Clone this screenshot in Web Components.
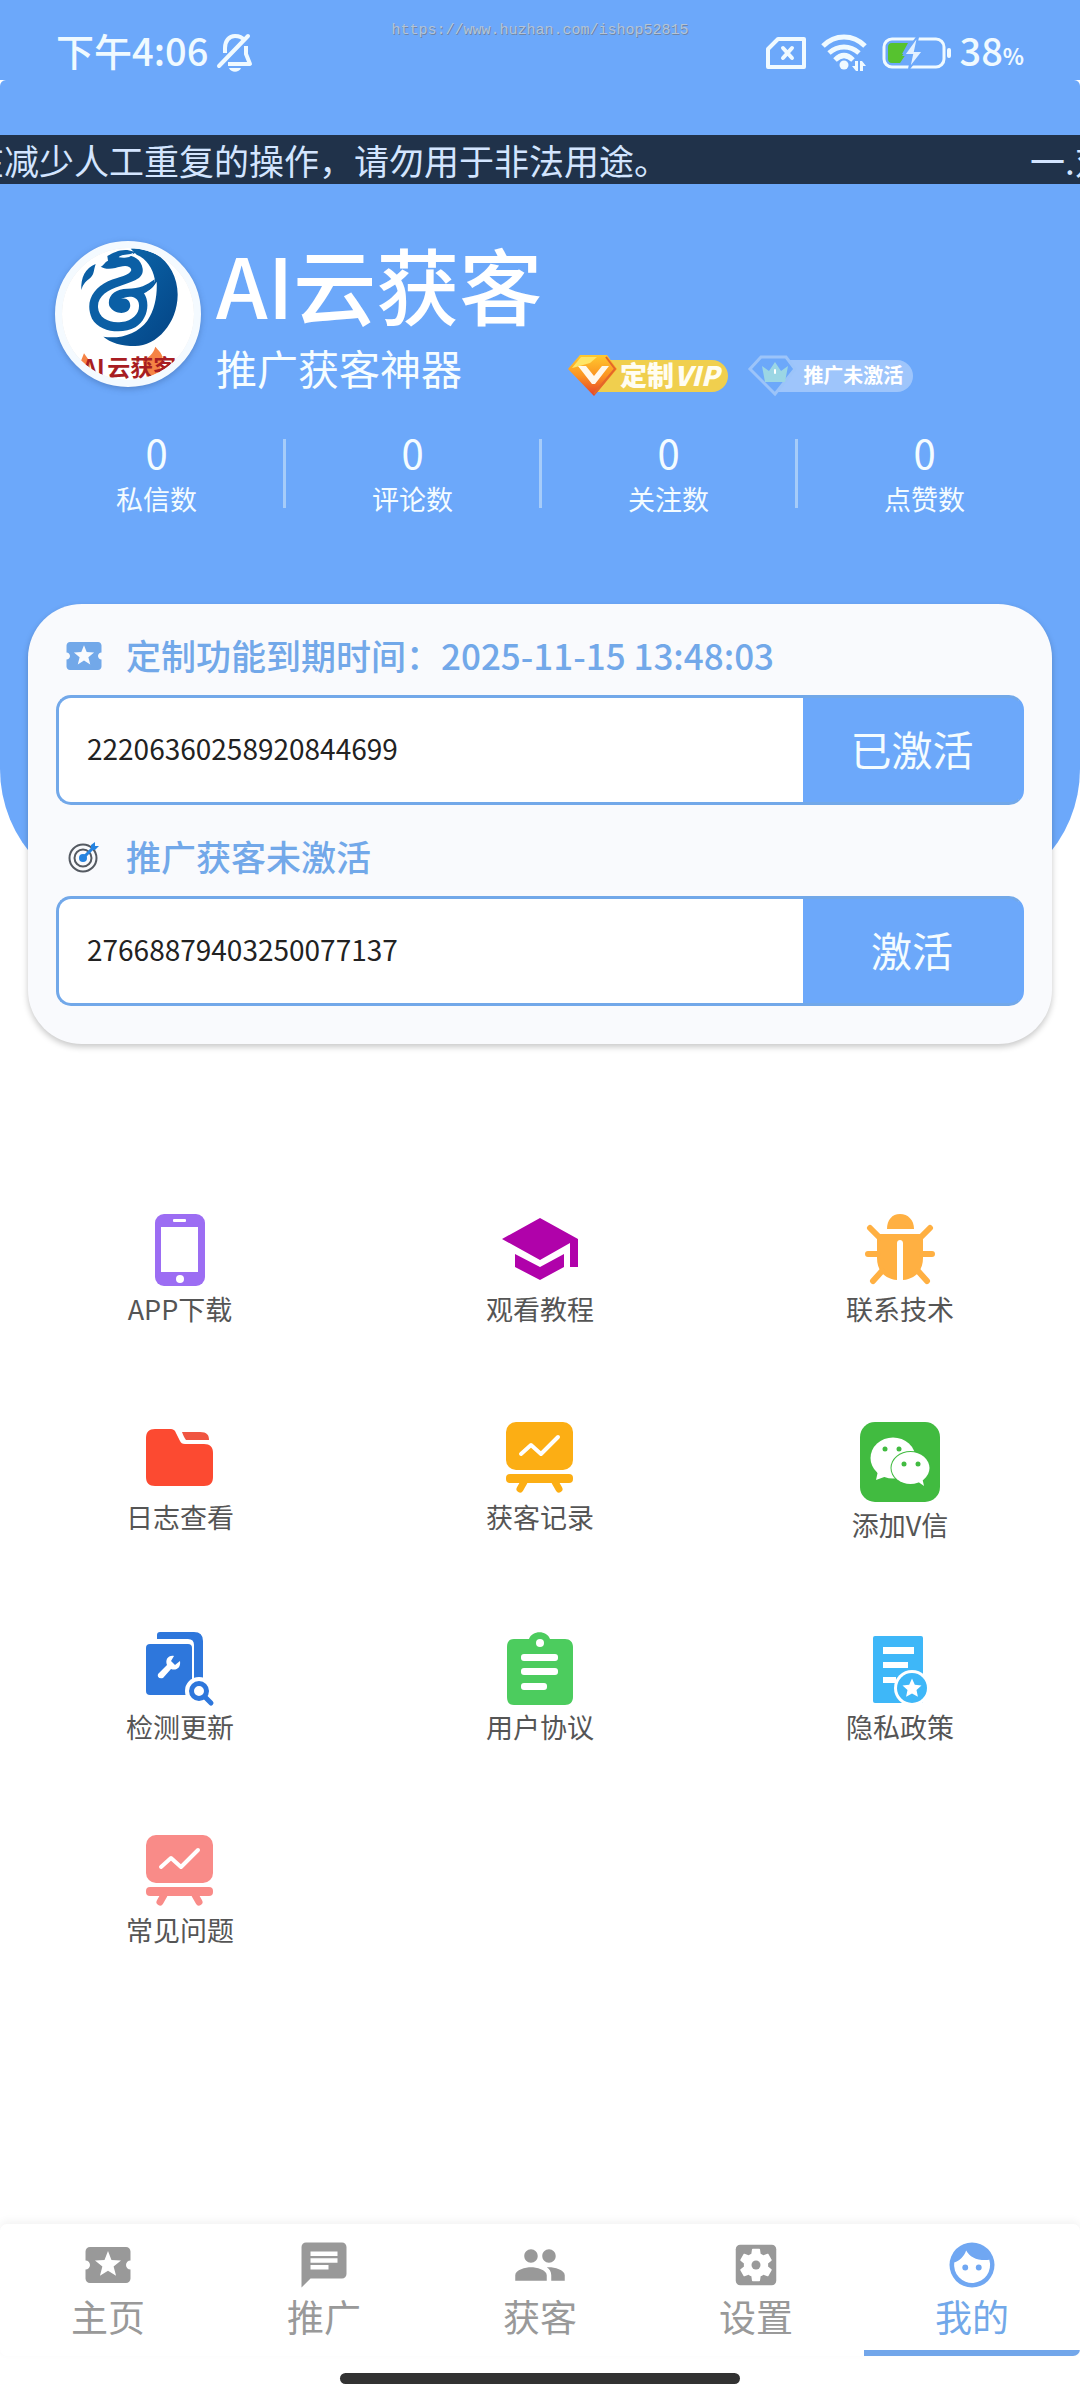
<!DOCTYPE html>
<html lang="zh-CN">
<head>
<meta charset="UTF-8">
<meta name="viewport" content="width=device-width, initial-scale=1">
<title>AI云获客</title>
<style>
:root {
    --blue: #6ca8fa;
    --blue-text: #72a8e9;
    --grey: #999999;
}
body {
    margin: 0;
    background: #ffffff;
    font-family: "Noto Sans CJK SC", "Noto Sans", sans-serif;
}
</style>
</head>
<body>

<my-page>
    <status-bar slot="status" time="下午4:06" battery="38"></status-bar>

    <profile-header slot="header">
        <notice-bar slot="notice">
            <span>在减少人工重复的操作，请勿用于非法用途。</span>
            <span>一.对</span>
        </notice-bar>
        <span slot="name">AI云获客</span>
        <span slot="slogan">推广获客神器</span>
        <vip-badge slot="badges" kind="gold">定制<i>VIP</i></vip-badge>
        <vip-badge slot="badges" kind="off">推广未激活</vip-badge>
        <stat-item slot="stats" value="0">私信数</stat-item>
        <stat-item slot="stats" value="0">评论数</stat-item>
        <stat-item slot="stats" value="0">关注数</stat-item>
        <stat-item slot="stats" value="0" last>点赞数</stat-item>
    </profile-header>

    <activation-card>
        <activation-field icon="ticket" code="22206360258920844699" action="已激活">定制功能到期时间：2025-11-15 13:48:03</activation-field>
        <activation-field icon="target" code="27668879403250077137" action="激活">推广获客未激活</activation-field>
    </activation-card>

    <menu-grid>
        <menu-item icon="phone">APP下载</menu-item>
        <menu-item icon="cap">观看教程</menu-item>
        <menu-item icon="bug">联系技术</menu-item>
        <menu-item icon="folder">日志查看</menu-item>
        <menu-item icon="board" style="color:#fcae14">获客记录</menu-item>
        <menu-item icon="wechat" large>添加V信</menu-item>
        <menu-item icon="check">检测更新</menu-item>
        <menu-item icon="clipboard">用户协议</menu-item>
        <menu-item icon="privacy">隐私政策</menu-item>
        <menu-item icon="board" style="color:#f98b88">常见问题</menu-item>
    </menu-grid>

    <tab-bar slot="tabs">
        <tab-item icon="ticket">主页</tab-item>
        <tab-item icon="chat">推广</tab-item>
        <tab-item icon="people">获客</tab-item>
        <tab-item icon="settings">设置</tab-item>
        <tab-item icon="face" active>我的</tab-item>
    </tab-bar>
</my-page>

<script>
// alle Icons an einer Stelle: [viewBox, Inhalt]
const ICONS = {
    ticket: ['0 0 24 24', '<path fill="currentColor" d="M20 12c0-1.1.9-2 2-2V6c0-1.1-.9-2-2-2H4c-1.1 0-1.99.9-1.99 2v4c1.1 0 1.99.9 1.99 2s-.89 2-2 2v4c0 1.1.9 2 2 2h16c1.1 0 2-.9 2-2v-4c-1.1 0-2-.9-2-2zm-4.42 4.8L12 14.5l-3.58 2.3 1.08-4.12-3.29-2.69 4.24-.25L12 5.8l1.54 3.95 4.24.25-3.29 2.69 1.09 4.11z"/>'],
    chat: ['0 0 24 24', '<path fill="currentColor" d="M20 2H4c-1.1 0-1.99.9-1.99 2L2 22l4-4h14c1.1 0 2-.9 2-2V4c0-1.1-.9-2-2-2zM6 9h12v2H6V9zm8 5H6v-2h8v2zm4-6H6V6h12v2z"/>'],
    people: ['0 0 24 24', '<path fill="currentColor" d="M16 11c1.66 0 2.99-1.34 2.99-3S17.66 5 16 5c-1.66 0-3 1.34-3 3s1.34 3 3 3zm-8 0c1.66 0 2.99-1.34 2.99-3S9.66 5 8 5C6.34 5 5 6.34 5 8s1.34 3 3 3zm0 2c-2.33 0-7 1.17-7 3.5V19h14v-2.5c0-2.33-4.67-3.5-7-3.5zm8 0c-.29 0-.62.02-.97.05 1.16.84 1.97 1.97 1.97 3.45V19h6v-2.5c0-2.33-4.67-3.5-7-3.5z"/>'],
    settings: ['0 0 24 24', '<rect x="3" y="3" width="18" height="18" rx="2" fill="currentColor"/><path fill="#fff" transform="translate(12 12) scale(.72) translate(-12 -12)" d="M19.43 12.98c.04-.32.07-.64.07-.98s-.03-.66-.07-.98l2.11-1.65c.19-.15.24-.42.12-.64l-2-3.46c-.12-.22-.39-.3-.61-.22l-2.49 1c-.52-.4-1.08-.73-1.69-.98l-.38-2.65C14.46 2.18 14.25 2 14 2h-4c-.25 0-.46.18-.49.42l-.38 2.65c-.61.25-1.17.59-1.69.98l-2.49-1c-.23-.09-.49 0-.61.22l-2 3.46c-.13.22-.07.49.12.64l2.11 1.65c-.04.32-.07.65-.07.98s.03.66.07.98l-2.11 1.65c-.19.15-.24.42-.12.64l2 3.46c.12.22.39.3.61.22l2.49-1c.52.4 1.08.73 1.69.98l.38 2.65c.03.24.24.42.49.42h4c.25 0 .46-.18.49-.42l.38-2.65c.61-.25 1.17-.59 1.69-.98l2.49 1c.23.09.49 0 .61-.22l2-3.46c.12-.22.07-.49-.12-.64l-2.11-1.65z"/><circle cx="12" cy="12" r="2" fill="currentColor"/>'],
    face: ['0 0 24 24', '<circle cx="12" cy="12" r="10" fill="currentColor"/><path fill="#fff" d="M9.4 5.5C11 8.500 14.600 10.300 19.700 9.700A8 8 0 1 1 4.100 10.900C6.500 10 8.600 8 9.400 5.500Z"/><circle cx="9" cy="13.100" r="1.300" fill="currentColor"/><circle cx="15" cy="13.100" r="1.300" fill="currentColor"/>'],
    target: ['0 0 42 42', '<g fill="none" stroke="#555a62" stroke-width="2"><circle cx="20" cy="22" r="13.500"/><circle cx="20" cy="22" r="8.500"/></g><circle cx="20" cy="22" r="4" fill="#2583e0"/><path d="M20 22L31 11" stroke="#2583e0" stroke-width="3"/><path d="M28 14V9l4-3v4h4l-4 4z" fill="#2583e0"/>'],
    phone: ['0 0 72 72', '<rect x="11" width="50" height="72" rx="9" fill="#9c6df3"/><rect x="17" y="13" width="37" height="45" fill="#fff"/><rect x="29" y="5" width="13" height="3" rx="1" fill="#fff"/><circle cx="36" cy="65" r="4" fill="#fff"/>'],
    cap: ['0 0 72 72', '<path fill="#b002aa" d="M36 4L74 25V53H66V29L36 46L-2 25Z"/><path fill="#b002aa" d="M11 40L36 53L60 40V53L36 66L11 53Z"/>'],
    bug: ['0 0 72 72', '<g fill="#ffb042"><path d="M23 15C23 6 28 0 36 0s14 6 14 15z"/><path d="M13 20H59V44C59 57 51 65 39 66V29c0-4-6-4-6 0V66C21 65 13 57 13 44z"/></g><path fill="none" stroke="#ffb042" stroke-width="6" stroke-linecap="round" d="M6 14L16 24M66 14L56 24M4 40H14M68 40H58M9 67L18 57M63 67L54 57"/>'],
    folder: ['0 0 72 72', '<path fill="#fc4a31" d="M11 7H27c2 0 3 1 4 2l5 10c1 2 2 3 5 3H60c6 0 9 3 9 9V55c0 6-3 9-9 9H11c-6 0-9-3-9-9V16c0-6 3-9 9-9z"/><path fill="#f05541" d="M38 10H56c7 0 9 3 9 8H42c-2-3-3-5-4-8z"/>'],
    board: ['0 0 72 72', '<g fill="currentColor"><rect x="2" width="67" height="48" rx="10"/><rect x="2" y="52" width="67" height="9" rx="4"/></g><path fill="none" stroke="currentColor" stroke-width="7" stroke-linecap="round" d="M20 60L16 67M51 60L55 67"/><path fill="none" stroke="#fff" stroke-width="4" stroke-linecap="round" stroke-linejoin="round" d="M17 32L27 23L37 32L54 15"/>'],
    wechat: ['0 0 80 80', '<rect width="80" height="80" rx="15" fill="#41bb40"/><ellipse cx="33" cy="36" rx="22.500" ry="20.500" fill="#fff"/><path d="M18 49L16 58L27 54z" fill="#fff"/><ellipse cx="50.500" cy="46" rx="20" ry="17" fill="#41bb40"/><ellipse cx="50.500" cy="46" rx="19" ry="16" fill="#fff"/><path d="M57 59L64 64L62 55z" fill="#fff"/><g fill="#41bb40"><circle cx="25" cy="27" r="2.500"/><circle cx="39" cy="27" r="2.500"/><circle cx="44" cy="42" r="2.500"/><circle cx="58" cy="42" r="2.500"/></g>'],
    check: ['0 0 72 72', '<g fill="#2e77dc"><path d="M13 7V3q0-3 3-3H50q9 0 9 9V46H50V13q0-6-6-6z"/><rect x="2" y="12" width="46" height="51" rx="4"/></g><path fill="#fff" d="M14 42L23 33C21 28 24 23 30 24L27 29L31 33L36 29C37 36 32 39 27 37L19 46C15 47 13 45 14 42z"/><circle cx="55" cy="59" r="14" fill="#fff"/><path d="M61 65L67 71" stroke="#2e77dc" stroke-width="5" stroke-linecap="round"/><circle cx="55" cy="59" r="7.500" fill="#fff" stroke="#2e77dc" stroke-width="5"/>'],
    clipboard: ['0 0 72 72', '<path fill="#4ccc5e" d="M10 7H25C28-2 43-2 46 7H61c5 0 8 3 8 8V65c0 5-3 8-8 8H10c-5 0-7-3-7-8V15c0-5 2-8 7-8z"/><g fill="#fff"><circle cx="36" cy="11" r="4"/><rect x="17" y="22" width="37" height="7" rx="3"/><rect x="17" y="36" width="37" height="7" rx="3"/><rect x="17" y="51" width="26" height="7" rx="3"/></g>'],
    privacy: ['0 0 72 72', '<rect x="9" y="4" width="50" height="67" rx="2" fill="#3eb7f8"/><g fill="#fff"><rect x="19" y="15" width="31" height="7"/><rect x="19" y="30" width="25" height="6"/><rect x="19" y="45" width="13" height="6"/><circle cx="48" cy="56" r="18"/></g><circle cx="48" cy="56" r="15" fill="#3eb7f8"/><path fill="#fff" d="M48 46.500l2.800 6.300 6.700.7-5 4.600 1.400 6.700-5.900-3.400-5.900 3.400 1.400-6.700-5-4.600 6.700-.7z"/>'],
    bellOff: ['0 0 36 38', '<g fill="none" stroke="#f0faff" stroke-width="4" stroke-linejoin="round"><path d="M8 19V14C8 7 12 2 18 2C22 2 25 3 27 6"/><path d="M29 12V20L33 30H11"/><path d="M2 32L31 2" stroke-linecap="round"/></g><path d="M12 34H24C22 39 14 39 12 34z" fill="#f0faff"/>'],
    sim: ['0 0 40 32', '<path fill="none" stroke="#f0faff" stroke-width="4" stroke-linejoin="round" d="M12 2H38V30H2V12z"/><path stroke="#f0faff" stroke-width="4" stroke-linecap="round" d="M17 11L26 21M26 11L17 21"/>'],
    wifi: ['0 0 46 36', '<g fill="none" stroke="#f0faff" stroke-width="5"><path d="M2 11C14-1 32-1 44 11"/><path d="M8 18C17 10 29 10 38 18"/><path d="M14 25C20 19 26 19 32 25"/></g><circle cx="23" cy="30" r="4.500" fill="#f0faff"/><path fill="#f0faff" d="M34 26h3v10h-2l-4-5h3zM39 36V26h2l4 5h-3v5z"/>'],
    battery: ['0 0 70 32', '<rect x="2" y="2" width="60" height="28" rx="8" fill="none" stroke="#f0faff" stroke-width="3"/><path fill="#56c22f" d="M10 6H26L20 17H24L18 26H10C7 26 6 24 6 22V10C6 8 7 6 10 6z"/><rect x="65" y="11" width="4" height="10" rx="2" fill="#f0faff"/><path fill="#e4f1ff" stroke="#6ca8fa" stroke-width="2" d="M35 0L22 18H30L27 32L41 14H33L36 0z"/>'],
    gem: ['0 0 50 42', '<defs><linearGradient id="g" x1="0" y1="0" x2="0" y2="1"><stop offset="0" stop-color="#ffc92e"/><stop offset=".5" stop-color="#fb9421"/><stop offset="1" stop-color="#e5402a"/></linearGradient></defs><path fill="url(#g)" d="M12 0H39L49 14L26 41L0 14z"/><path fill="#ffe566" d="M13 2H29L22 8L8 12L4 13z"/><path fill="none" stroke="#e3672a" stroke-width="2" d="M38 2L47 14L26 39"/><path fill="#fff8ec" d="M10 11H18L26 21L34 11H41L27 29H24z"/>'],
    crown: ['0 0 50 42', '<path fill="#6ca8fa" stroke="#9cc4f9" stroke-width="3" d="M13 2H38L47 14L27 39L2 14z"/><path fill="#9bd6e4" d="M14 11L21 16L27 7L33 16L40 11L37 27H17z"/><rect x="26" y="14" width="2" height="5" rx="1" fill="#fff"/>']
};

class appIcon extends HTMLElement {
    constructor() {
        super();
        this.attachShadow({ mode: 'open' });
    }
    connectedCallback() {
        const [box, body] = ICONS[this.getAttribute('name')];
        this.shadowRoot.innerHTML = `
          <style>
:host { display: block; flex: none; }
svg { display: block; width: 100%; height: 100%; overflow: visible; }
          </style>
          <svg viewBox="${box}" aria-hidden="true">${body}</svg>
        `;
    }
}
customElements.define('app-icon', appIcon);

class myPage extends HTMLElement {
    constructor() {
        super();
        this.attachShadow({ mode: 'open' }).innerHTML = `
          <style>
:host {
    display: flex;
    flex-direction: column;
    min-height: 100vh;
    overflow: hidden;
}
footer { margin-top: auto; }
.homeBar {
    width: 37%;
    height: 11px;
    margin: 17px auto 16px;
    border-radius: 6px;
    background: #323232;
}
          </style>
          <slot name="status"></slot>
          <slot name="header"></slot>
          <main><slot></slot></main>
          <footer>
            <slot name="tabs"></slot>
            <div class="homeBar"></div>
          </footer>
        `;
    }
}
customElements.define('my-page', myPage);

class statusBar extends HTMLElement {
    constructor() {
        super();
        this.attachShadow({ mode: 'open' }).innerHTML = `
          <style>
:host {
    display: grid;
    grid-template-columns: 1fr auto 1fr;
    height: 80px;
    padding: 0 56px;
    box-sizing: border-box;
    background: var(--blue);
    color: #f0faff;
}
.group {
    display: flex;
    align-items: center;
    height: 106px;
    font-size: 38px;
    font-weight: 500;
}
.group span { padding-bottom: 8px; }
.right { justify-content: flex-end; }
.bell { width: 36px; height: 38px; margin-left: 9px; }
.sim { width: 40px; height: 32px; margin-right: 15px; }
.wifi { width: 46px; height: 36px; margin-right: 15px; }
.battery { width: 70px; height: 32px; margin-right: 7px; }
small { font-size: 22px; font-weight: 700; margin-top: 4px; }
.url {
    padding-top: 21px;
    font: 15px/20px "Liberation Mono", monospace;
    color: #b4c4d8;
    text-shadow: 1px 1px 0 #6f86a6;
}
          </style>
          <div class="group"><span>${this.getAttribute('time')}</span><app-icon class="bell" name="bellOff"></app-icon></div>
          <div class="url">https://www.huzhan.com/ishop52815</div>
          <div class="group right">
            <app-icon class="sim" name="sim"></app-icon>
            <app-icon class="wifi" name="wifi"></app-icon>
            <app-icon class="battery" name="battery"></app-icon>
            <span>${this.getAttribute('battery')}</span><small>%</small>
          </div>
        `;
    }
}
customElements.define('status-bar', statusBar);

class noticeBar extends HTMLElement {
    constructor() {
        super();
        this.attachShadow({ mode: 'open' }).innerHTML = `
          <style>
:host {
    display: block;
    overflow: hidden;
    background: #20324a;
    color: #d3e5ff;
    font-size: 35px;
    line-height: 49px;
    white-space: nowrap;
}
/* Lauftext, Stand der Laufschrift ueber --run */
.track {
    --run: -31px;
    display: flex;
    gap: 361px;
    margin-left: var(--run);
}
          </style>
          <div class="track"><slot></slot></div>
        `;
    }
}
customElements.define('notice-bar', noticeBar);

class brandAvatar extends HTMLElement {
    constructor() {
        super();
        this.attachShadow({ mode: 'open' }).innerHTML = `
          <style>
:host {
    display: block;
    flex: none;
    width: 132px;
    height: 132px;
    border: 7px solid #f4faff;
    border-radius: 50%;
    overflow: hidden;
    background: #ffffff;
    box-shadow: 0 2px 6px rgba(40,70,120,0.35);
}
svg { display: block; border-radius: 50%; box-shadow: 0 0 4px rgba(0,0,0,0.2); }
text { font-family: "Noto Sans CJK SC", sans-serif; font-weight: 700; font-size: 69px; }
          </style>
          <svg viewBox="66 84 396 396" width="132" height="132">
            <defs><linearGradient id="b" x1="0" y1="0" x2="1" y2="1"><stop offset="0" stop-color="#0c6bb0"/><stop offset="1" stop-color="#044384"/></linearGradient></defs>
            <path fill="url(#b)" d="M272 86C360 80 414 150 413 225C412 310 350 378 285 378C245 378 210 368 190 350C240 358 292 342 322 302C345 268 352 225 350 185C336 210 318 216 300 216C330 202 348 190 344 176C338 146 320 116 290 104z"/>
            <path fill="#0b5fa5" d="M124 210C122 172 136 144 167 132C160 152 164 164 148 176C134 186 128 196 124 210z"/>
            <path fill="#0b5fa5" d="M182 140C192 136 192 128 204 122L202 108C220 98 238 88 262 90L286 96C284 104 266 106 252 106C276 104 304 116 308 146C312 178 276 184 240 198C204 210 172 228 174 262C176 296 210 310 244 306C282 302 302 276 296 248C290 226 262 226 242 238C260 230 274 246 270 262C264 286 222 284 208 258C200 228 226 206 262 206C300 206 320 196 344 178C344 198 330 212 312 220C332 250 322 300 286 322C246 344 178 336 156 296C134 248 158 206 204 184C240 168 268 168 274 150C270 132 244 138 226 144C206 148 192 146 182 140z"/>
            <path fill="#f4faff" d="M236 112C246 100 268 106 280 98C278 112 254 116 236 112z"/>
            <path fill="#f58345" d="M122 425L132 400L150 425L148 470zM308 420C326 412 340 402 346 380C356 392 370 402 368 424L350 470H320z"/>
            <text x="127" y="469" fill="#a81d22">AI</text>
            <text x="202" y="469" fill="#a81d22">云获客</text>
          </svg>
        `;
    }
}
customElements.define('brand-avatar', brandAvatar);

class vipBadge extends HTMLElement {
    constructor() {
        super();
        const off = this.getAttribute('kind') === 'off';
        this.attachShadow({ mode: 'open' }).innerHTML = `
          <style>
:host {
    display: flex;
    align-items: center;
    height: 42px;
    color: #fffdf2;
    font-weight: 900;
    white-space: nowrap;
}
app-icon { width: 50px; height: 42px; z-index: 1; }
.pill {
    height: 32px;
    margin-left: -24px;
    padding: 0 9px 0 26px;
    border-radius: 0 16px 16px 0;
    background: #f0cf4e;
    font-size: 27px;
    line-height: 30px;
}
.off {
    padding: 0 10px 0 29px;
    background: #9ec5fb;
    color: #ffffff;
    font-size: 20px;
    font-weight: 700;
}
          </style>
          <app-icon name="${off ? 'crown' : 'gem'}"></app-icon>
          <span class="pill ${off ? 'off' : ''}"><slot></slot></span>
        `;
    }
}
customElements.define('vip-badge', vipBadge);

class statItem extends HTMLElement {
    constructor() {
        super();
        this.attachShadow({ mode: 'open' }).innerHTML = `
          <style>
:host {
    display: flex;
    flex: 1;
    align-items: flex-start;
    color: #f4fcff;
}
.body { flex: 1; text-align: center; }
b { display: block; font-size: 40px; line-height: 26px; font-weight: 400; }
.name { display: block; margin-top: 18px; font-size: 27px; line-height: 32px; }
.line { width: 3px; height: 69px; background: #a6ccf9; }
:host([last]) .line { background: none; }
          </style>
          <div class="body">
            <b>${this.getAttribute('value')}</b>
            <span class="name"><slot></slot></span>
          </div>
          <div class="line"></div>
        `;
    }
}
customElements.define('stat-item', statItem);

class profileHeader extends HTMLElement {
    constructor() {
        super();
        this.attachShadow({ mode: 'open' }).innerHTML = `
          <style>
:host {
    display: block;
    padding: 55px 0 386px;
    border-radius: 6px 6px 132px 132px;
    background: var(--blue);
    color: #f6fdff;
}
.profile {
    display: flex;
    gap: 15px;
    padding: 57px 55px 0;
}
h1 {
    margin: 0;
    font-size: 83px;
    line-height: 84px;
    font-weight: 500;
    color: #ffffff;
}
.row {
    display: flex;
    align-items: center;
    margin-top: 18px;
}
.slogan { margin: 0 106px 0 0; font-size: 41px; line-height: 48px; white-space: nowrap; }
.badges { display: flex; gap: 20px; padding-top: 12px; height: 36px; }
.stats { display: flex; margin: 48px 26px 0 30px; }
          </style>
          <slot name="notice"></slot>
          <div class="profile">
            <brand-avatar></brand-avatar>
            <div>
              <h1><slot name="name"></slot></h1>
              <div class="row">
                <p class="slogan"><slot name="slogan"></slot></p>
                <div class="badges"><slot name="badges"></slot></div>
              </div>
            </div>
          </div>
          <div class="stats"><slot name="stats"></slot></div>
        `;
    }
}
customElements.define('profile-header', profileHeader);

class activationCard extends HTMLElement {
    constructor() {
        super();
        this.attachShadow({ mode: 'open' }).innerHTML = `
          <style>
:host {
    display: block;
    position: relative;
    margin: -297px 28px 0;
    padding: 0 28px 38px;
    border-radius: 54px;
    background: #f9fafd;
    box-shadow: 0 3px 6px rgba(0,0,0,0.22);
}
          </style>
          <slot></slot>
        `;
    }
}
customElements.define('activation-card', activationCard);

class activationField extends HTMLElement {
    constructor() {
        super();
        this.attachShadow({ mode: 'open' }).innerHTML = `
          <style>
:host { display: block; padding-top: 13px; }
label {
    display: flex;
    align-items: center;
    gap: 21px;
    height: 78px;
    padding-left: 7px;
    color: var(--blue-text);
    font-size: 35px;
    font-weight: 500;
    white-space: nowrap;
}
label span { padding-bottom: 4px; }
app-icon { width: 42px; height: 42px; }
.group {
    display: flex;
    height: 110px;
    box-sizing: border-box;
    border: 3px solid var(--blue-text);
    border-right-color: var(--blue);
    border-radius: 15px;
    overflow: hidden;
    background: var(--blue);
}
input {
    flex: 1;
    min-width: 0;
    padding: 0 28px 4px;
    border: 0;
    outline: 0;
    background: #ffffff;
    color: #222222;
    font: 28px "Noto Sans CJK SC", sans-serif;
}
button {
    width: 218px;
    padding: 0 0 4px;
    border: 0;
    background: var(--blue);
    color: #f4fcff;
    font: 41px "Noto Sans CJK SC", sans-serif;
}
          </style>
          <label for="code"><app-icon name="${this.getAttribute('icon')}"></app-icon><span><slot></slot></span></label>
          <div class="group">
            <input id="code" type="text" value="${this.getAttribute('code')}">
            <button type="button">${this.getAttribute('action')}</button>
          </div>
        `;
    }
}
customElements.define('activation-field', activationField);

class menuGrid extends HTMLElement {
    constructor() {
        super();
        this.attachShadow({ mode: 'open' }).innerHTML = `
          <style>
:host {
    display: grid;
    grid-template-columns: repeat(3, 1fr);
    grid-template-rows: 208px 210px 203px auto;
    margin-top: 170px;
}
          </style>
          <slot></slot>
        `;
    }
}
customElements.define('menu-grid', menuGrid);

class menuItem extends HTMLElement {
    constructor() {
        super();
        this.attachShadow({ mode: 'open' }).innerHTML = `
          <style>
:host { display: block; }
a {
    display: flex;
    flex-direction: column;
    align-items: center;
    color: inherit;
    text-decoration: none;
}
app-icon { width: 72px; height: 72px; }
:host([large]) app-icon { width: 80px; height: 80px; }
span { color: #555555; font-size: 27px; line-height: 46px; }
          </style>
          <a href="#"><app-icon name="${this.getAttribute('icon')}"></app-icon><span><slot></slot></span></a>
        `;
    }
}
customElements.define('menu-item', menuItem);

class tabBar extends HTMLElement {
    constructor() {
        super();
        this.attachShadow({ mode: 'open' }).innerHTML = `
          <style>
nav {
    display: flex;
    border-radius: 7px;
    overflow: hidden;
    background: #ffffff;
    box-shadow: 0 -3px 8px rgba(0,0,0,0.05);
}
:host { display: block; }
          </style>
          <nav><slot></slot></nav>
        `;
    }
}
customElements.define('tab-bar', tabBar);

class tabItem extends HTMLElement {
    constructor() {
        super();
        this.attachShadow({ mode: 'open' }).innerHTML = `
          <style>
:host { display: block; flex: 1; color: var(--grey); }
:host([active]) { color: var(--blue-text); }
a {
    display: flex;
    flex-direction: column;
    align-items: center;
    padding: 14px 0 10px;
    border-bottom: 6px solid transparent;
    color: inherit;
    font-size: 37px;
    line-height: 48px;
    text-decoration: none;
}
:host([active]) a { border-color: #72a6ea; }
app-icon { width: 54px; height: 54px; }
:host([active]) app-icon { color: #70a7f2; }
          </style>
          <a href="#"><app-icon name="${this.getAttribute('icon')}"></app-icon><span><slot></slot></span></a>
        `;
    }
}
customElements.define('tab-item', tabItem);
</script>
</body>
</html>
